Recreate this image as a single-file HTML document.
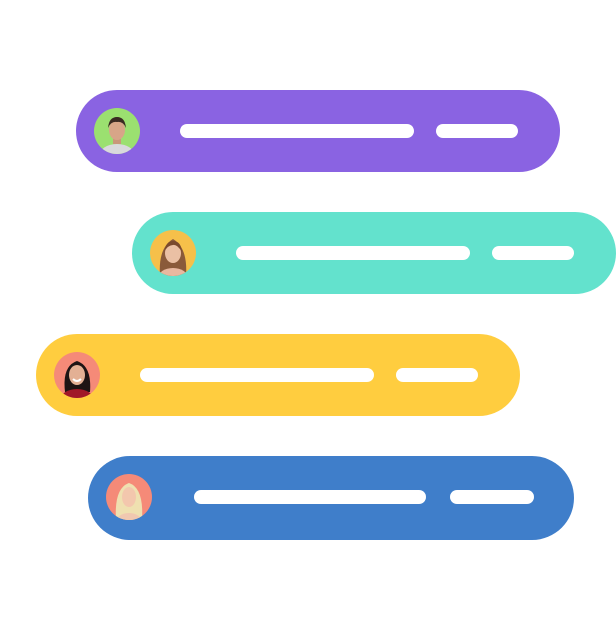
<!DOCTYPE html>
<html><head><style>
body{margin:0;width:616px;height:630px;background:#fff;position:relative;overflow:hidden;font-family:"Liberation Sans",sans-serif}
.p{position:absolute;height:82px;border-radius:41px}
.b{position:absolute;height:14px;border-radius:7px;background:#fff}
.a{position:absolute;width:46px;height:46px;border-radius:50%;overflow:hidden}
</style></head><body>
<div class="p" style="left:76px;top:90px;width:484px;background:#8A63E2"></div>
<div class="b" style="left:180px;top:124px;width:234px"></div>
<div class="b" style="left:436px;top:124px;width:82px"></div>
<div class="a" style="left:94px;top:108px;background:#9BE070">
<svg width="46" height="46"><ellipse cx="23" cy="48" rx="18" ry="12" fill="#d9d9dc"/><rect x="19" y="28" width="8" height="8" fill="#c9977a"/><ellipse cx="23" cy="22" rx="8" ry="10" fill="#d7a588"/><path d="M14 20 Q15 9 23 9 Q31 9 32 20 Q29 13 23 14 Q17 13 14 20Z" fill="#3a2a22"/></svg></div>

<div class="p" style="left:132px;top:212px;width:484px;background:#63E2CD"></div>
<div class="b" style="left:236px;top:246px;width:234px"></div>
<div class="b" style="left:492px;top:246px;width:82px"></div>
<div class="a" style="left:150px;top:230px;background:#F6C04A">
<svg width="46" height="46"><path d="M10 46 Q8 18 23 9 Q38 18 36 46Z" fill="#8a5a3a"/><ellipse cx="23" cy="48" rx="15" ry="10" fill="#e8b8a0"/><ellipse cx="23" cy="23" rx="8" ry="10" fill="#eac0a4"/><path d="M14 22 Q16 11 23 11 Q31 11 32 22 Q27 14 23 15 Q18 15 14 22Z" fill="#7a4a2e"/></svg></div>

<div class="p" style="left:36px;top:334px;width:484px;background:#FFCD3F"></div>
<div class="b" style="left:140px;top:368px;width:234px"></div>
<div class="b" style="left:396px;top:368px;width:82px"></div>
<div class="a" style="left:54px;top:352px;background:#F58A78">
<svg width="46" height="46"><path d="M11 40 Q8 14 23 9 Q38 14 36 40Z" fill="#1e1414"/><ellipse cx="23" cy="48" rx="17" ry="11" fill="#a01828"/><ellipse cx="23" cy="23" rx="8" ry="10" fill="#e3b094"/><path d="M19 27 Q23 31 27 27" stroke="#fff" stroke-width="2" fill="none"/></svg></div>

<div class="p" style="left:88px;top:456px;width:486px;height:84px;border-radius:42px;background:#3F7ECA"></div>
<div class="b" style="left:194px;top:490px;width:232px"></div>
<div class="b" style="left:450px;top:490px;width:84px"></div>
<div class="a" style="left:106px;top:474px;background:#F58A78">
<svg width="46" height="46"><path d="M10 46 Q8 14 23 9 Q38 14 36 46Z" fill="#efe0b0"/><ellipse cx="23" cy="48" rx="13" ry="9" fill="#f0c8b0"/><ellipse cx="23" cy="23" rx="7" ry="10" fill="#f3c7ad"/></svg></div>
</body></html>
